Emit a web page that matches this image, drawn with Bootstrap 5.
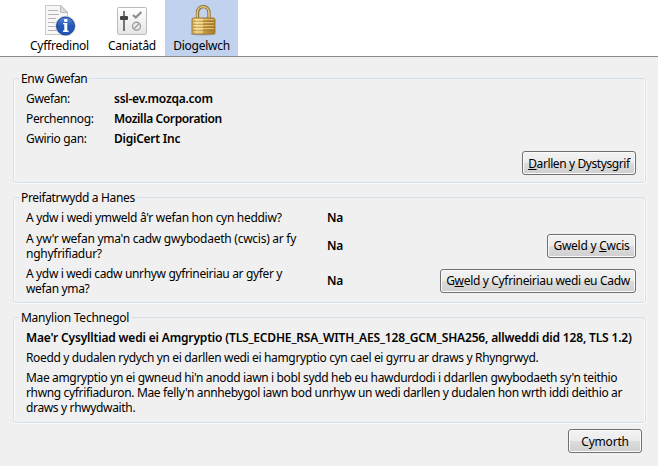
<!DOCTYPE html>
<html lang="cy">
<head>
<meta charset="utf-8">
<title>Diogelwch</title>
<link href="https://cdn.jsdelivr.net/npm/bootstrap@5.3.0/dist/css/bootstrap.min.css" rel="stylesheet">
<style>
html, body { height: 466px; overflow: hidden; }
body { background: #f0f0f0; color: #000; font: 12px/15px "Noto Sans", "Open Sans", sans-serif; letter-spacing: -.35px; }
b { letter-spacing: -.38px; font-weight: 600; }
.cipher { letter-spacing: -.17px; }
.site { letter-spacing: -.24px; }
.topbar { height: 57px; background: #fff; border-bottom: 1px solid #8b8b8b; padding-left: 20px; }
.tab { height: 56px; padding-top: 4px; cursor: default; letter-spacing: -.25px; }
.tab-general { width: 79px; }
.tab-perms { width: 66px; }
.tab-security { width: 73px; background: #c1d2ee; }
.tab svg { width: 32px; height: 32px; display: block; }
.tab span { line-height: 19px; }
.pane { padding-top: 14px; }
.group { border: 1px solid #d3dfe9; border-radius: 3px; box-shadow: inset 1px 0 #fafbfc, inset -1px 0 #fafbfc, 0 1px #fbfbfb, 1px 0 #fbfbfb; margin: 0 12px 7px 13px; padding: 3px 9px 0 12px; height: 112px; }
.group > legend { float: none; width: auto; font-size: 12px; line-height: 15px; margin: 0 0 0 -7px; padding: 0 2px; }
.tall { height: 113px; }
.ln { line-height: 20px; white-space: nowrap; }
.key { width: 88px; }
.q { width: 301px; white-space: nowrap; }
.snug { letter-spacing: -.3px; }
.loose { letter-spacing: -.26px; }
.two { height: 35px; }
.cert-row { padding-top: 2px; }
.xbtn { font: inherit; letter-spacing: -.25px; height: 24px; padding: 0; color: #000; border: 1px solid #707070; border-radius: 3px; box-shadow: inset 0 0 0 1px #fbfbfb; background: linear-gradient(#f2f2f2 0 5%, #ebebeb 50%, #dddddd 50%, #cfcfcf); white-space: nowrap; }
.para { white-space: nowrap; margin-top: 2px; }
.w1 { width: 114px; letter-spacing: -.4px; } .w2 { width: 89px; } .w3 { width: 196px; letter-spacing: -.33px; } .w4 { width: 74px; letter-spacing: -.2px; }
.footer-bar { padding: 6px 16px 0 0; }
</style>
<script src="https://cdn.jsdelivr.net/npm/bootstrap@5.3.0/dist/js/bootstrap.bundle.min.js"></script>
</head>
<body>
<nav class="topbar d-flex">
  <div class="tab tab-general d-flex flex-column align-items-center">
    <svg viewBox="0 0 32 32"><defs><linearGradient id="bl" x2="0" y2="1"><stop stop-color="#5b8de0"/><stop offset=".5" stop-color="#2558b5"/><stop offset="1" stop-color="#1f55bd"/></linearGradient></defs>
      <path d="M1.500 1.500H17L23.500 8V30.500H1.500Z" fill="#f7f7f7" stroke="#c9c9c9"/><path d="M16.500 1.500V8.500H23.500Z" fill="#ddd" stroke="#bbb"/>
      <path d="M4 6.500H14M4 10.500H15M4 14.500H12M4 18.500H11M4 22.500H11M4 26.500H14" stroke="#b4b4b4"/>
      <circle cx="21.500" cy="22" r="9.700" fill="url(#bl)" stroke="#c9ccd3" stroke-width="1.200"/><circle cx="21.500" cy="22" r="8.900" fill="none" stroke="#1d459a"/>
      <rect x="20" y="15" width="3.500" height="3" rx="1.200" fill="#fff"/><path d="M19 19H23.300V26.500H24.500V28H19V26.500H20.300V20.300H19Z" fill="#fff"/></svg>
    <span>Cyffredinol</span>
  </div>
  <div class="tab tab-perms d-flex flex-column align-items-center">
    <svg viewBox="0 0 32 32"><defs><linearGradient id="gr" x2="0" y2="1"><stop stop-color="#fff"/><stop offset="1" stop-color="#e5e5e5"/></linearGradient></defs>
      <rect x="1.500" y="3.500" width="29" height="27" rx="1" fill="url(#gr)" stroke="#bbb"/>
      <path d="M8 7V27" stroke="#555" stroke-width="1.600"/><rect x="4" y="12" width="8" height="4" rx="1" fill="#444"/>
      <path d="M17 11L19.700 13.500L25.500 8" fill="none" stroke="#8b8b8b" stroke-width="2.200"/>
      <circle cx="20.500" cy="22.300" r="4" fill="none" stroke="#a0a0a0" stroke-width="1.400"/><path d="M17.700 25.100L23.300 19.500" stroke="#a0a0a0" stroke-width="1.400"/></svg>
    <span>Caniatâd</span>
  </div>
  <div class="tab tab-security d-flex flex-column align-items-center">
    <svg viewBox="0 0 32 32"><defs><linearGradient id="go"><stop stop-color="#c9a050"/><stop offset=".2" stop-color="#f0d48c"/><stop offset=".48" stop-color="#e4c273"/><stop offset=".5" stop-color="#c89b42"/><stop offset="1" stop-color="#a97d2c"/></linearGradient></defs>
      <ellipse cx="17" cy="30" rx="13" ry="1.500" fill="#67718a" opacity=".5"/>
      <path d="M11.500 15V9C11.500 .5 23 .5 23 9V15" fill="none" stroke="#8d6d2c" stroke-width="3.300"/><path d="M11.300 15V9C11.300 .7 23 .7 23 9V15" fill="none" stroke="#e6cd88" stroke-width="1.500"/>
      <rect x="6" y="14" width="23" height="16" rx="1.500" fill="url(#go)" stroke="#a27a2e"/>
      <path d="M7 17.500H28M7 20.500H28M7 23.500H28M7 26.500H28" stroke="#936719" stroke-opacity=".35"/><path d="M7 15.500H28M7 18.500H28M7 21.500H28M7 24.500H28" stroke="#fff1b5" stroke-opacity=".5"/></svg>
    <span>Diogelwch</span>
  </div>
</nav>
<main class="pane">
  <fieldset class="group">
    <legend>Enw Gwefan</legend>
    <div class="d-flex ln"><span class="key">Gwefan:</span><b class="site">ssl-ev.mozqa.com</b></div>
    <div class="d-flex ln"><span class="key">Perchennog:</span><b>Mozilla Corporation</b></div>
    <div class="d-flex ln"><span class="key">Gwirio gan:</span><b class="site">DigiCert Inc</b></div>
    <div class="cert-row d-flex justify-content-end"><button class="xbtn w1"><u>D</u>arllen y Dystysgrif</button></div>
  </fieldset>
  <fieldset class="group tall">
    <legend>Preifatrwydd a Hanes</legend>
    <div class="d-flex ln"><span class="q snug">A ydw i wedi ymweld â'r wefan hon cyn heddiw?</span><b>Na</b></div>
    <div class="d-flex align-items-center two"><span class="q loose">A yw'r wefan yma'n cadw gwybodaeth (cwcis) ar fy<br>nghyfrifiadur?</span><b>Na</b><button class="xbtn w2 ms-auto">Gweld y <u>C</u>wcis</button></div>
    <div class="d-flex align-items-center two"><span class="q">A ydw i wedi cadw unrhyw gyfrineiriau ar gyfer y<br>wefan yma?</span><b>Na</b><button class="xbtn w3 ms-auto">G<u>w</u>eld y Cyfrineiriau wedi eu Cadw</button></div>
  </fieldset>
  <fieldset class="group tall mb-0">
    <legend class="loose">Manylion Technegol</legend>
    <div class="ln"><b class="cipher">Mae'r Cysylltiad wedi ei Amgryptio (TLS_ECDHE_RSA_WITH_AES_128_GCM_SHA256, allweddi did 128, TLS 1.2)</b></div>
    <div class="ln">Roedd y dudalen rydych yn ei darllen wedi ei hamgryptio cyn cael ei gyrru ar draws y Rhyngrwyd.</div>
    <div class="para">Mae amgryptio yn ei gwneud hi'n anodd iawn i bobl sydd heb eu hawdurdodi i ddarllen gwybodaeth sy'n teithio<br>rhwng cyfrifiaduron. Mae felly'n annhebygol iawn bod unrhyw un wedi darllen y dudalen hon wrth iddi deithio ar<br>draws y rhwydwaith.</div>
  </fieldset>
  <div class="footer-bar d-flex justify-content-end"><button class="xbtn w4">Cymorth</button></div>
</main>
</body>
</html>
